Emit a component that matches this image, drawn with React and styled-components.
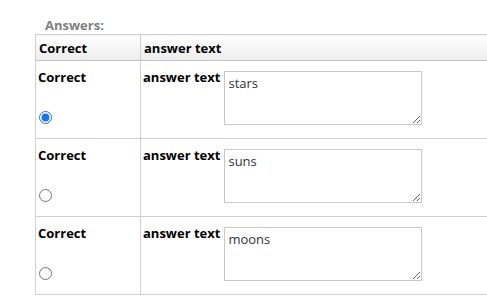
import React from "react";
import styled, { createGlobalStyle } from "styled-components";

const Global = createGlobalStyle`
	body {
		margin: 0;
		background: #fff;
		font-family: "Open Sans", "Liberation Sans", sans-serif;
		overflow: hidden;
	}
`;

const Wrap = styled.div`
	padding: 13px 0 0 35px;
`;

const Title = styled.div`
	font-size: 13px;
	font-weight: bold;
	color: #808080;
	padding-left: 10px;
	height: 21px;
	line-height: 24px;
`;

const Table = styled.table`
	border-collapse: collapse;
	width: 500px;
	font-size: 13px;
	table-layout: fixed;
`;

const Head = styled.th`
	text-align: left;
	font-weight: bold;
	color: #000;
	height: 25px;
	padding: 0 3px;
	border: 1px solid #cfcfcf;
	border-bottom: 1px solid #c4c4c4;
	background: linear-gradient(#ffffff, #ececec);
	width: ${(p) => p.w || "auto"};
`;

const Cell = styled.td`
	vertical-align: top;
	border: 1px solid #cfcfcf;
	height: 78px;
	padding: 7px 2px 0 2px;
	box-sizing: border-box;
`;

const CorrectCol = styled.div`
	display: flex;
	flex-direction: column;
	align-items: flex-start;
	gap: 25px;
`;

const Label = styled.span`
	font-weight: bold;
	color: #000;
	line-height: 18px;
`;

const Radio = styled.input`
	margin: 0 0 0 1px;
	width: 13px;
	height: 13px;
	accent-color: #1a73e8;
`;

const AnswerRow = styled.div`
	display: flex;
	align-items: flex-start;
	gap: 4px;
`;

const Text = styled.textarea`
	width: 198px;
	height: 54px;
	box-sizing: border-box;
	border: 1px solid #c8c8c8;
	margin: 3px 0 0 0;
	padding: 2px 3px;
	font-family: "Open Sans", "Liberation Sans", sans-serif;
	font-size: 13px;
	color: #333;
	resize: both;
	outline: none;
`;

const answers = [
	{ text: "stars", checked: true },
	{ text: "suns", checked: false },
	{ text: "moons", checked: false },
];

export default function App() {
	return (
		<Wrap>
			<Global />
			<Title>Answers:</Title>
			<Table>
				<thead>
					<tr>
						<Head w="98px">Correct</Head>
						<Head>answer text</Head>
					</tr>
				</thead>
				<tbody>
					{answers.map((a, i) => (
						<tr key={i}>
							<Cell>
								<CorrectCol>
									<Label>Correct</Label>
									<Radio type="radio" name="correct" defaultChecked={a.checked} />
								</CorrectCol>
							</Cell>
							<Cell>
								<AnswerRow>
									<Label>answer text</Label>
									<Text defaultValue={a.text} />
								</AnswerRow>
							</Cell>
						</tr>
					))}
				</tbody>
			</Table>
		</Wrap>
	);
}
